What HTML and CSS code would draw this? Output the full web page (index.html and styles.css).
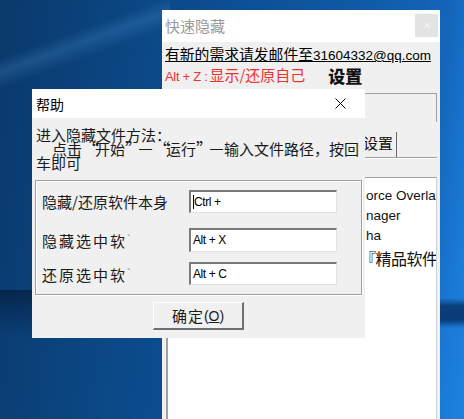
FILE: index.html
```html
<!DOCTYPE html>
<html lang="zh-CN">
<head>
<meta charset="utf-8">
<title>快速隐藏 - 帮助</title>
<link rel="stylesheet" href="styles.css">
</head>
<body>
<div class="desktop">
  <div class="win main-win">
    <div class="titlebar">
      <span class="win-title">快速隐藏</span>
      <span class="close-btn">✕</span>
    </div>
    <div class="main-body">
      <div class="mail">有新的需求请发邮件至<span class="mail-lat">31604332@qq.com</span></div>
      <div class="hotkey-row">
        <span class="hk"><span class="hk-key">Alt + Z :</span>显示/还原自己</span>
        <span class="settings">设置</span>
      </div>
      <div class="box1"></div>
      <div class="tabs"><span class="tab">设置</span></div>
      <div class="tab-panel">
        <ul class="list">
          <li>orce Overlay</li>
          <li>nager</li>
          <li>ha</li>
          <li class="cjk">『精品软件』</li>
        </ul>
      </div>
    </div>
  </div>

  <div class="win dlg">
    <div class="dlg-title">
      <span>帮助</span>
      <svg class="dlg-close" width="11" height="11" viewBox="0 0 11 11"><path d="M0.5 0.5 L10.5 10.5 M10.5 0.5 L0.5 10.5" stroke="#000" stroke-width="1" fill="none"/></svg>
    </div>
    <div class="dlg-body">
      <p class="help-text">进入隐藏文件方法：<br><span class="indent">点击<span class="q ql">“</span>开始<span class="q qr">”</span><span class="dash">—</span><span class="q ql">“</span>运行<span class="q qr">”</span><span class="dash">—</span>输入文件路径，按回</span><br>车即可</p>
      <div class="group">
        <div class="row r1">
          <span class="label">隐藏/还原软件本身</span>
          <span class="input"><span class="caret"></span>Ctrl +</span>
        </div>
        <div class="row r2">
          <span class="label spaced">隐藏选中软<span class="tick">`</span></span>
          <span class="input">Alt + X</span>
        </div>
        <div class="row r3">
          <span class="label spaced">还原选中软<span class="tick">`</span></span>
          <span class="input">Alt + C</span>
        </div>
      </div>
      <div class="btn-row">
        <span class="btn">确定<span class="acc">(<u>O</u>)</span></span>
      </div>
    </div>
  </div>
</div>
</body>
</html>
```
FILE: styles.css
```css
html, body {
  margin: 0;
  padding: 0;
}
body {
  width: 464px;
  height: 419px;
  overflow: hidden;
  font-family: "Liberation Sans", "Noto Sans CJK SC", sans-serif;
}
.desktop {
  position: relative;
  width: 464px;
  height: 419px;
  overflow: hidden;
  background:
    linear-gradient(180deg, rgba(0,0,0,0) 0, rgba(0,0,0,0) 298px, #0b3d7a 306px, #0b3d7a 320px, rgba(0,0,0,0) 328px) 440px 0 / 24px 419px no-repeat,
    linear-gradient(160deg, rgba(0,0,0,0) 0, rgba(0,0,0,0) 55px, rgba(90,160,220,0.22) 68px, rgba(0,0,0,0) 84px) 0 0 / 170px 100px no-repeat,
    linear-gradient(180deg, rgba(3,20,45,0.55) 0, rgba(3,20,45,0) 45px) 0 290px / 60px 60px no-repeat,
    linear-gradient(97deg, #0a396b 0%, #0b4682 25%, #0c4f93 45%, #0f5aa6 70%, #1466bb 88%, #1a7ad6 95%, #1d82de 100%);
}
.win {
  position: absolute;
  box-sizing: border-box;
  overflow: hidden;
}

/* ---- background window ---- */
.main-win {
  left: 162px;
  top: 10px;
  width: 278px;
  height: 420px;
  background: #f0f0f0;
}
.titlebar {
  height: 32px;
  background: #fff;
  display: flex;
  align-items: center;
  position: relative;
}
.win-title {
  padding-left: 3px;
  font-family: "Noto Sans CJK SC", sans-serif;
  font-size: 15px;
  color: #9a9a9a;
  line-height: 20px;
}
.close-btn {
  position: absolute;
  right: 2px;
  top: 4px;
  width: 23px;
  height: 23px;
  background: #e3e3e3;
  color: #f4f4f4;
  font-size: 10px;
  line-height: 23px;
  text-align: center;
}
.main-body {
  padding: 0 3px 0 3px;
}
.mail {
  margin-top: 3px;
  height: 18px;
  line-height: 18px;
  font-family: "Noto Sans CJK SC", sans-serif;
  font-size: 14.8px;
  color: #000;
  text-decoration: underline;
  white-space: nowrap;
}
.mail-lat {
  font-family: "Liberation Sans", sans-serif;
  font-size: 13.5px;
}
.hotkey-row {
  height: 22px;
  line-height: 22px;
  margin-top: 2px;
  display: flex;
  align-items: center;
  white-space: nowrap;
}
.hk {
  color: #f03030;
  font-size: 15px;
  font-family: "Noto Sans CJK SC", sans-serif;
}
.hk-key {
  font-family: "Liberation Sans", sans-serif;
  font-size: 13px;
  letter-spacing: -0.3px;
  margin-right: 2px;
}
.settings {
  margin-left: 23px;
  font-family: "Noto Sans CJK SC", sans-serif;
  font-weight: 900;
  font-size: 17px;
  color: #111;
}
.box1 {
  margin-top: 6px;
  height: 29px;
  box-sizing: border-box;
  border-top: 1px solid #a0a0a0;
  border-right: 1px solid #a0a0a0;
}
.tabs {
  height: 35px;
  display: flex;
  align-items: flex-end;
}
.tab {
  margin-left: 150px;
  width: 82px;
  height: 25px;
  box-sizing: border-box;
  border-right: 1px solid #696969;
  text-align: right;
  padding-right: 3px;
  font-family: "Noto Sans CJK SC", sans-serif;
  font-size: 15px;
  line-height: 22px;
  color: #111;
}
.tab-panel {
  border-top: 1px solid #a0a0a0;
  box-shadow: inset 0 1px 0 #fff;
  padding-top: 19px;
}
.list {
  list-style: none;
  margin: 0 0 0 1px;
  padding: 8px 0 0 0;
  width: 271px;
  height: 260px;
  box-sizing: border-box;
  background: #fff;
  border-left: 2px solid #a0a0a0;
  border-top: 1px solid #a0a0a0;
  border-right: 1px solid #d0d0d0;
  overflow: hidden;
}
.list li {
  padding-left: 198px;
  height: 20px;
  line-height: 20px;
  font-family: "Liberation Sans", sans-serif;
  font-size: 13.5px;
  color: #111;
  white-space: nowrap;
}
.list li.cjk {
  padding-left: 192px;
  font-family: "Noto Sans CJK SC", sans-serif;
  font-size: 16px;
  height: 22px;
  line-height: 24px;
  letter-spacing: -0.5px;
}

/* ---- help dialog ---- */
.dlg {
  left: 32px;
  top: 89px;
  width: 333px;
  height: 249px;
  background: #f0f0f0;
}
.dlg-title {
  height: 29px;
  background: #fff;
  display: flex;
  align-items: center;
  padding-left: 4px;
  font-family: "Noto Sans CJK SC", sans-serif;
  font-size: 14px;
  color: #000;
}
.dlg-close {
  margin-left: auto;
  margin-right: 19px;
}
.help-text {
  margin: 0;
  width: 329px;
  height: 52px;
  box-sizing: border-box;
  overflow-x: clip;
  overflow-y: visible;
  padding: 10px 0 0 4px;
  font-family: "Noto Sans CJK SC", sans-serif;
  font-size: 15px;
  line-height: 14px;
  color: #1a1a1a;
  white-space: nowrap;
}
.indent {
  padding-left: 16px;
}
.q {
  display: inline-block;
  width: 13px;
  font-size: 17px;
  line-height: 14px;
  vertical-align: top;
}
.ql { text-align: right; }
.qr { text-align: left; }
.dash {
  display: inline-block;
  width: 15px;
  text-align: center;
  font-family: "Liberation Sans", sans-serif;
  font-size: 13px;
  line-height: 14px;
  vertical-align: top;
}
.group {
  margin: 10px 3px 0 3px;
  height: 115px;
  box-sizing: border-box;
  border: 1px solid #a0a0a0;
  box-shadow: inset 1px 1px 0 #fff, 1px 1px 0 #fff;
  padding-left: 6px;
  padding-top: 9px;
}
.row {
  display: flex;
  align-items: center;
  height: 23px;
}
.r2 { margin-top: 15px; height: 24px; }
.r3 { margin-top: 10px; }
.label {
  width: 147px;
  font-family: "Noto Sans CJK SC", sans-serif;
  font-size: 15px;
  color: #1a1a1a;
  white-space: nowrap;
  line-height: 20px;
}
.label.spaced {
  letter-spacing: 2px;
}
.tick {
  font-family: "Liberation Sans", sans-serif;
  font-size: 11px;
  vertical-align: 4px;
  color: #666;
  letter-spacing: 0;
}
.input {
  width: 148px;
  height: 100%;
  box-sizing: border-box;
  background: #fff;
  border-top: 2px solid #7a7a7a;
  border-left: 2px solid #7a7a7a;
  border-bottom: 1px solid #e3e3e3;
  border-right: 1px solid #e3e3e3;
  font-family: "Liberation Sans", sans-serif;
  font-size: 12px;
  letter-spacing: -0.4px;
  line-height: 19px;
  padding-left: 2px;
  color: #000;
  display: flex;
  align-items: center;
}
.caret {
  display: inline-block;
  width: 1px;
  height: 14px;
  background: #000;
}
.btn-row {
  display: flex;
  justify-content: center;
  padding-top: 7px;
}
.btn {
  width: 91px;
  height: 28px;
  box-sizing: border-box;
  background: #f0f0f0;
  border-top: 1px solid #fff;
  border-left: 1px solid #fff;
  border-right: 2px solid #6f6f6f;
  border-bottom: 2px solid #6f6f6f;
  display: flex;
  align-items: center;
  justify-content: center;
  font-family: "Noto Sans CJK SC", sans-serif;
  font-size: 15px;
  color: #1a1a1a;
  letter-spacing: 1px;
}
.acc {
  font-family: "Liberation Sans", sans-serif;
  font-size: 14px;
  letter-spacing: 0;
}
```
